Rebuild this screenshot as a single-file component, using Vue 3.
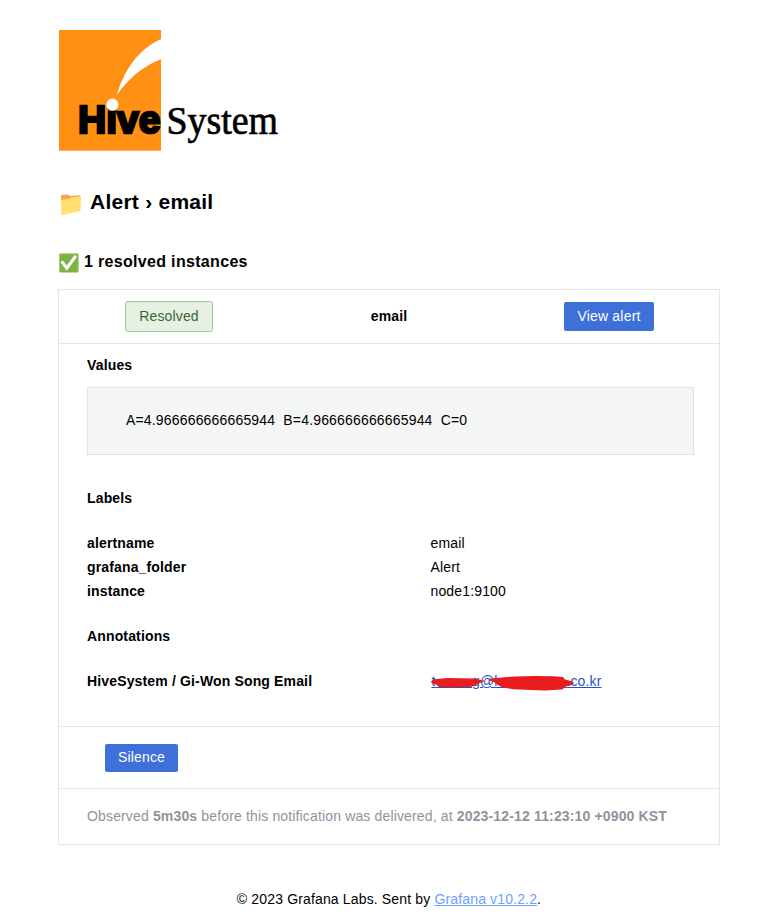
<script setup>
const labels = [
  { name: 'alertname', value: 'email' },
  { name: 'grafana_folder', value: 'Alert' },
  { name: 'instance', value: 'node1:9100' },
];

const values = 'A=4.966666666665944  B=4.966666666665944  C=0';
</script>

<template>
  <div class="mail">
    <svg class="logo" width="230" height="121" viewBox="0 0 230 121">
      <rect width="102" height="120.7" fill="#ff9013" />
      <path d="M58 65C64 42 80 18 102 9.3V29.3C84 36 69 49 58 65Z" fill="#fff" />
      <text class="hive" x="19" y="103.3" textLength="82.5" lengthAdjust="spacingAndGlyphs">Hive</text>
      <circle cx="53.4" cy="74.7" r="6.1" fill="#fff" />
      <text class="system" x="107.5" y="104" textLength="111.5" lengthAdjust="spacingAndGlyphs">System</text>
    </svg>

    <h1 class="title">
      <svg class="folder" width="24" height="24" viewBox="0 0 24 24">
        <path d="M3 4Q3 3 4 3L10 2.5Q11 2.5 11.6 4L21.5 3.2Q22.5 3.2 22.5 4.3V8H3Z" fill="#f2a74b" />
        <path d="M3 8.6Q3 7.7 4 7.6L11 7.2L13 5.4L22 4.6Q23 4.6 22.9 5.7L22.5 18Q22.4 18.9 21.6 19.2L4.4 22.9Q3.3 23.1 3.2 22Z" fill="#ffe070" />
      </svg>
      <span>Alert › email</span>
    </h1>

    <h2 class="subtitle">
      <svg class="check" width="20" height="20" viewBox="0 0 20 20">
        <rect x=".3" y=".5" width="19.2" height="19" rx="1" fill="#7cb342" />
        <path d="M1 1H19V19" fill="none" stroke="#9ccc65" stroke-width=".8" />
        <path d="M3.4 9.4L7.8 15.2L16 4" fill="none" stroke="#fff" stroke-width="3.1" stroke-linecap="round" />
      </svg>
      <span>1 resolved instances</span>
    </h2>

    <div class="card">
      <div class="row head">
        <div class="cell"><span class="badge">Resolved</span></div>
        <div class="cell name"><b>email</b></div>
        <div class="cell"><a class="btn view">View alert</a></div>
      </div>

      <div class="row body">
        <h3>Values</h3>
        <div class="values">{{ values }}</div>

        <h3 class="labels-title">Labels</h3>
        <div class="pair" v-for="label in labels" :key="label.name">
          <b>{{ label.name }}</b>
          <span>{{ label.value }}</span>
        </div>

        <h3 class="annotations-title">Annotations</h3>
        <div class="pair">
          <b>HiveSystem / Gi-Won Song Email</b>
          <span class="address">
            <a><i class="gap first">t</i>g@<i class="gap second">h</i>.co.kr</a>
            <svg class="scribble" width="146" height="20" viewBox="0 0 146 20">
              <path d="M1 9.5L4 7.2L9 6.8L17 6L45 6.5L48 7.5L54 8.4L53 10L47 12L44 14L40 15L20 15.4L9 15L6 12.5L2 11.4Z" />
              <path d="M58 8.3L63 6.2L72 5.4L85 4.5L105 4L124 4.3L133 5.1L135 7.4L141 9L144 11L142 13L136 14.5L132 17.5L115 18.5L95 17.8L83 17.2L72 15.3L68 13L64 10Z" />
            </svg>
          </span>
        </div>
      </div>

      <div class="row actions">
        <a class="btn silence">Silence</a>
      </div>

      <div class="row observed">
        <p>Observed <b>5m30s</b> before this notification was delivered, at <b>2023-12-12 11:23:10 +0900 KST</b></p>
      </div>
    </div>

    <p class="footer">© 2023 Grafana Labs. Sent by <a>Grafana v10.2.2</a>.</p>
  </div>
</template>

<style>
body {
  background: #fff;
}
</style>

<style scoped>
.mail {
  box-sizing: border-box;
  width: 763px;
  height: 918px;
  padding: 30px 43px 0 58px;
  overflow: hidden;
  font-family: "Liberation Sans", Arial, sans-serif;
  font-size: 14px;
  line-height: 24px;
  letter-spacing: 0.15px;
  color: #000;
}

h1,
h2,
h3,
p {
  margin: 0;
}

.logo {
  display: block;
  margin-left: 1px;
}

.logo text {
  letter-spacing: 0;
}

.hive {
  font: bold 39px "Liberation Sans", Arial, sans-serif;
  stroke: #000;
  stroke-width: 2.6px;
}

.system {
  font: 41px "Liberation Serif", serif;
  stroke: #000;
  stroke-width: 0.7px;
}

.title {
  display: flex;
  gap: 8px;
  height: 32px;
  margin-top: 35px;
  font-size: 21px;
  line-height: 32px;
  letter-spacing: 0.25px;
}

.folder {
  margin-top: 6px;
}

.subtitle {
  display: flex;
  gap: 5px;
  height: 24px;
  margin-top: 31px;
  font-size: 16px;
  line-height: 26px;
  letter-spacing: 0.32px;
}

.check {
  margin: 4px 0 0 1px;
}

.card {
  box-sizing: border-box;
  width: 662px;
  margin-top: 16px;
  border: 1px solid #e4e5e6;
}

.row {
  box-sizing: border-box;
}

.row + .row {
  border-top: 1px solid #e4e5e6;
}

.head {
  display: grid;
  grid-template-columns: repeat(3, 1fr);
  height: 53px;
}

.cell {
  display: flex;
  align-items: center;
  justify-content: center;
}

.name {
  padding-bottom: 2px;
}

.badge {
  padding: 0 13px;
  border: 1px solid #96cd91;
  border-radius: 3px;
  background: #e6f1e4;
  color: #3d6337;
  line-height: 29px;
}

.btn {
  padding: 0 13px;
  border-radius: 2px;
  background: #3d71d9;
  color: #fff;
  line-height: 28px;
}

.view {
  line-height: 29px;
  letter-spacing: 0.2px;
}

.silence {
  padding-bottom: 2px;
  line-height: 26px;
}

.body {
  height: 383px;
  padding: 9px 25px 0 28px;
}

h3 {
  font-size: 14px;
  line-height: 24px;
}

.values {
  box-sizing: border-box;
  height: 68px;
  margin-top: 10px;
  padding-left: 38px;
  border: 1px solid #e1e4e4;
  background: #f4f5f5;
  line-height: 64px;
  letter-spacing: 0.17px;
  white-space: pre;
}

.labels-title {
  margin: 31px 0 21px;
}

.annotations-title {
  margin: 21px 0;
}

.pair {
  display: grid;
  grid-template-columns: 343.5px 1fr;
}

.address {
  position: relative;
}

.address a {
  display: flex;
  width: 170px;
  margin-left: 1px;
  color: #1f54c7;
  text-decoration: underline;
}

.gap {
  font-style: normal;
  border-bottom: 1px solid #1f54c7;
  height: 18px;
}

.first {
  width: 41px;
}

.second {
  width: 73px;
}

.scribble {
  position: absolute;
  top: 3px;
  left: -1px;
  fill: #e81e1e;
}

.actions {
  display: flex;
  align-items: flex-start;
  height: 62px;
  padding: 17px 46px;
}

.observed {
  height: 56px;
  padding: 15px 28px;
  color: #91929e;
}

.footer {
  margin-top: 42px;
  text-align: center;
}

.footer a {
  color: #6e9fff;
  text-decoration: underline;
}
</style>
